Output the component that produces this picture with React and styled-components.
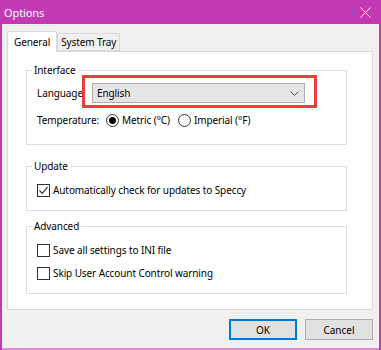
import React from "react";
import styled, { createGlobalStyle } from "styled-components";

const GlobalStyle = createGlobalStyle`
  html, body {
    margin: 0;
    padding: 0;
    background: #ffffff;
  }
  * {
    box-sizing: border-box;
  }
`;

const Window = styled.div`
  width: 381px;
  height: 350px;
  display: flex;
  flex-direction: column;
  background: #c239b3;
  font-family: "Noto Sans", "Liberation Sans", sans-serif;
  font-size: 10px;
  letter-spacing: -0.1px;
  color: #000;
`;

const TitleBar = styled.div`
  height: 24px;
  display: flex;
  align-items: center;
  justify-content: space-between;
  padding: 0 10px 0 4px;
  color: #fff;
  font-size: 11px;
`;

const Body = styled.div`
  flex: 1;
  display: flex;
  flex-direction: column;
  background: #f0f0f0;
  margin: 0 2px;
  border-bottom: 2px solid #e08ad8;
  padding: 6px 6px 0 5px;
`;

const Tabs = styled.div`
  display: flex;
  align-items: flex-end;
  height: 21px;
`;

const Tab = styled.div`
  height: ${(p) => (p.$active ? "21px" : "18px")};
  padding: 0 ${(p) => (p.$active ? "6px" : "3px")};
  display: flex;
  align-items: center;
  background: ${(p) => (p.$active ? "#fff" : "#f0f0f0")};
  border: 1px solid #d9d9d9;
  border-bottom: ${(p) => (p.$active ? "none" : "1px solid #d9d9d9")};
  position: relative;
  z-index: ${(p) => (p.$active ? 1 : 0)};
  margin-bottom: ${(p) => (p.$active ? "-1px" : "0")};
`;

const Panel = styled.div`
  background: #fff;
  border: 1px solid #d9d9d9;
  padding: 18px 25px 15px 18px;
  display: flex;
  flex-direction: column;
`;

const Group = styled.div`
  position: relative;
  border: 1px solid #dcdcdc;
  margin-top: ${(p) => p.$top || 0}px;
  padding: ${(p) => p.$pad};
  display: flex;
  flex-direction: column;
  gap: ${(p) => p.$gap || 0}px;
`;

const GroupTitle = styled.span`
  position: absolute;
  top: -8px;
  left: 5px;
  padding: 0 2px;
  background: #fff;
  line-height: 14px;
`;

const FormRow = styled.div`
  display: flex;
  align-items: center;
  height: ${(p) => p.$h || 14}px;
`;

const FieldLabel = styled.span`
  width: ${(p) => p.$w}px;
  flex-shrink: 0;
`;

const ComboWrap = styled.div`
  position: relative;
  width: 213px;
`;

const Combo = styled.div`
  height: 20px;
  background: #e5e5e5;
  border: 1px solid #adadad;
  display: flex;
  align-items: center;
  justify-content: space-between;
  padding: 0 5px 0 4px;
`;

const Highlight = styled.div`
  position: absolute;
  top: -8px;
  left: -10px;
  right: -12px;
  bottom: -5px;
  border: 3px solid #f03c3c;
  pointer-events: none;
`;

const Radio = styled.span`
  width: 13px;
  height: 13px;
  border-radius: 50%;
  border: 1px solid #333;
  display: inline-flex;
  align-items: center;
  justify-content: center;
  margin-right: 3px;
  flex-shrink: 0;
  &::after {
    content: "";
    width: 7px;
    height: 7px;
    border-radius: 50%;
    background: ${(p) => (p.$checked ? "#000" : "transparent")};
  }
`;

const Option = styled.label`
  display: flex;
  align-items: center;
  margin-right: ${(p) => p.$gap || 0}px;
`;

const Box = styled.span`
  width: 13px;
  height: 13px;
  border: 1px solid #333;
  display: inline-flex;
  align-items: center;
  justify-content: center;
  margin-right: 3px;
  flex-shrink: 0;
  background: #fff;
`;

const ButtonRow = styled.div`
  display: flex;
  justify-content: flex-end;
  gap: 8px;
  padding: 9px 0 0 0;
`;

const Button = styled.button`
  width: 68px;
  height: 21px;
  font: inherit;
  color: #000;
  background: #e1e1e1;
  border: 1px solid ${(p) => (p.$default ? "#0078d7" : "#adadad")};
  box-shadow: ${(p) => (p.$default ? "inset 0 0 0 1px #0078d7" : "none")};
  padding: 0;
`;

const Check = ({ checked }) => (
  <Box>
    {checked && (
      <svg width="11" height="11" viewBox="0 0 11 11">
        <path d="M1.5 5.5 L4.2 8.3 L9.6 2.2" fill="none" stroke="#333" strokeWidth="1.2" />
      </svg>
    )}
  </Box>
);

export default function App() {
  return (
    <>
      <GlobalStyle />
      <Window>
        <TitleBar>
          <span>Options</span>
          <svg width="11" height="11" viewBox="0 0 11 11">
            <path d="M0.5 0.5 L10.5 10.5 M10.5 0.5 L0.5 10.5" stroke="#fff" strokeWidth="1" />
          </svg>
        </TitleBar>
        <Body>
          <Tabs>
            <Tab $active>General</Tab>
            <Tab>System Tray</Tab>
          </Tabs>
          <Panel>
            <Group $pad="12px 0 17px 10px" $gap={10}>
              <GroupTitle>Interface</GroupTitle>
              <FormRow $h={20}>
                <FieldLabel $w={55}>Language</FieldLabel>
                <ComboWrap>
                  <Combo>
                    <span>English</span>
                    <svg width="9" height="5" viewBox="0 0 9 5">
                      <path d="M0.5 0.5 L4.5 4.5 L8.5 0.5" fill="none" stroke="#555" strokeWidth="1" />
                    </svg>
                  </Combo>
                  <Highlight />
                </ComboWrap>
              </FormRow>
              <FormRow>
                <FieldLabel $w={69}>Temperature:</FieldLabel>
                <Option $gap={8}>
                  <Radio $checked />
                  Metric (°C)
                </Option>
                <Option>
                  <Radio />
                  Imperial (°F)
                </Option>
              </FormRow>
            </Group>
            <Group $top={21} $pad="16px 0 13px 10px">
              <GroupTitle>Update</GroupTitle>
              <FormRow>
                <Option>
                  <Check checked />
                  Automatically check for updates to Speccy
                </Option>
              </FormRow>
            </Group>
            <Group $top={15} $pad="16px 0 13px 10px" $gap={9}>
              <GroupTitle>Advanced</GroupTitle>
              <FormRow>
                <Option>
                  <Check />
                  Save all settings to INI file
                </Option>
              </FormRow>
              <FormRow>
                <Option>
                  <Check />
                  Skip User Account Control warning
                </Option>
              </FormRow>
            </Group>
          </Panel>
          <ButtonRow>
            <Button $default>OK</Button>
            <Button>Cancel</Button>
          </ButtonRow>
        </Body>
      </Window>
    </>
  );
}
